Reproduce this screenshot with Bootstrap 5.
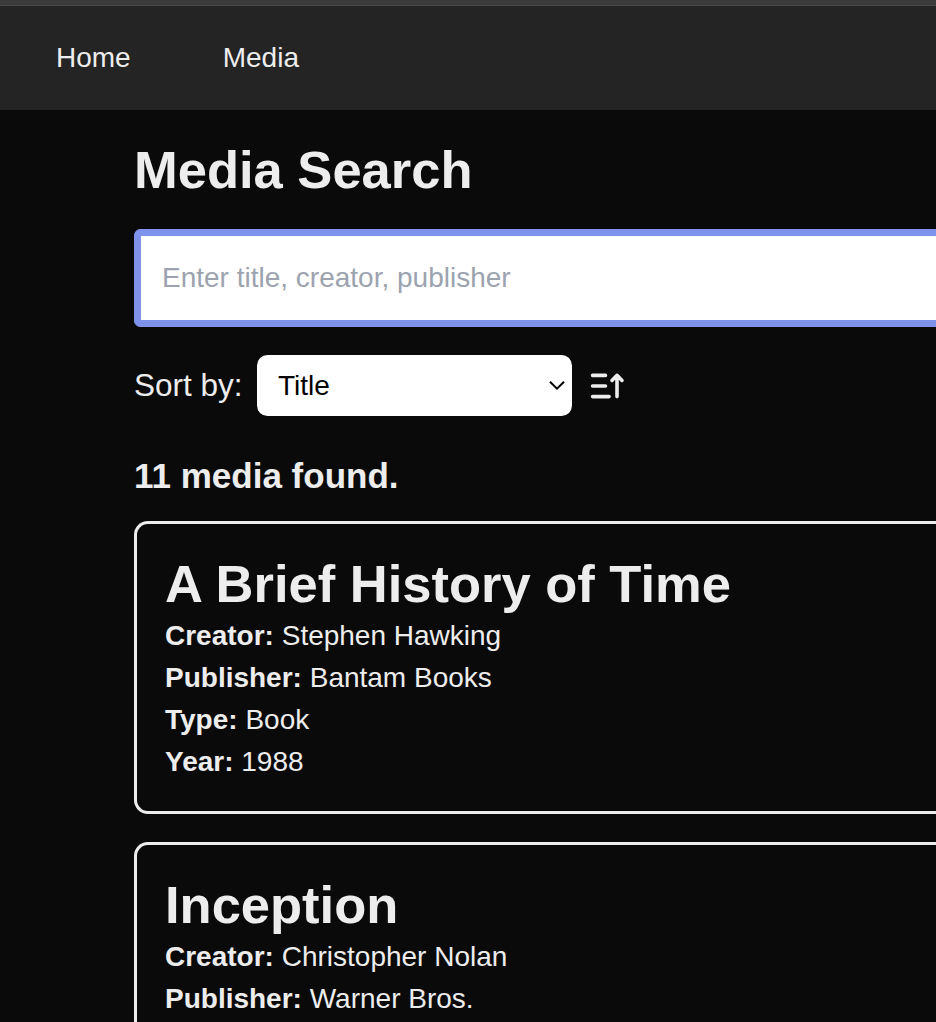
<!DOCTYPE html>
<html lang="en">
<head>
<meta charset="utf-8">
<meta name="viewport" content="width=device-width, initial-scale=1">
<title>Media Search</title>
<link href="https://cdn.jsdelivr.net/npm/bootstrap@5.3.0/dist/css/bootstrap.min.css" rel="stylesheet">
<style>
  body { background: #0a0a0a; color: #ededed; font: 28px/42px "Liberation Sans", Arial, sans-serif; height: 1022px; }
  .top-strip { height: 6px; background: #3c3c3c; border-bottom: 1px solid #484848; }
  .site-nav { height: 104px; background: #242424; padding-left: 56px; gap: 92px; }
  .site-nav .nav-link { color: #ededed; padding: 0; }
  .page-body { padding: 28px 0 0 134px; }
  h1, .media-card h2 { font-size: 52.5px; line-height: 63px; font-weight: 700; }
  h1 { margin-bottom: 28px; }
  .search-box.form-control { height: 98px; padding: 0 21px; border: 7px solid #7f93ec; border-right: 0; border-radius: 7px 0 0 7px; font-size: 28px; background: #fff; box-shadow: none; }
  .search-box.form-control::placeholder { color: #9ca3af; opacity: 1; }
  .sort-row { height: 61px; margin-top: 28px; gap: 14.5px; font-size: 31.5px; }
  .sort-row label { padding-bottom: 2px; }
  .sort-select { width: 315px; height: 61px; }
  .sort-select .form-select { width: 315px; height: 61px; padding: 0 21px; border: 0; border-radius: 10.5px; font-size: 28px; line-height: 42px; color: #000; background: #fff; }
  .select-arrow { right: 7px; top: 25px; pointer-events: none; }
  .found-count { font-size: 35px; line-height: 49px; margin: 35px 0 21px; font-weight: 700; }
  .media-card { background: transparent; color: inherit; border: 3px solid #ededed; border-right: 0; border-radius: 14px 0 0 14px; padding: 28px; margin-bottom: 28px; }
  .media-card:last-child { border-bottom: 0; border-bottom-left-radius: 0; padding-bottom: 2px; margin-bottom: 0; }
</style>
</head>
<body class="overflow-hidden">
<div class="top-strip"></div>
<nav class="site-nav d-flex align-items-center">
  <a class="nav-link" href="#">Home</a>
  <a class="nav-link" href="#">Media</a>
</nav>
<main class="page-body">
  <h1>Media Search</h1>
  <input class="form-control search-box" type="text" placeholder="Enter title, creator, publisher" aria-label="Search">
  <div class="sort-row d-flex align-items-center">
    <label for="sort">Sort by:</label>
    <div class="sort-select position-relative">
      <select id="sort" class="form-select"><option>Title</option></select>
      <svg class="select-arrow position-absolute" width="16" height="12" viewBox="0 0 16 12" fill="none" stroke="#000" stroke-width="2"><path d="M1 1.7 8 8.7 15 1.7"/></svg>
    </div>
    <svg class="sort-icon" width="42" height="42" viewBox="0 0 42 42" fill="none" stroke="#ededed" stroke-width="3.6" stroke-linecap="round" stroke-linejoin="round"><path d="M5.6 10.4H18.5M5.6 21H18.5M5.6 31.6H22.1M30 31.6V10.4M25 15.4 30 10.3 35 15.4"/></svg>
  </div>
  <p class="found-count">11 media found.</p>
  <article class="card media-card">
    <h2 class="m-0">A Brief History of Time</h2>
    <div><strong>Creator:</strong> Stephen Hawking</div>
    <div><strong>Publisher:</strong> Bantam Books</div>
    <div><strong>Type:</strong> Book</div>
    <div><strong>Year:</strong> 1988</div>
  </article>
  <article class="card media-card">
    <h2 class="m-0">Inception</h2>
    <div><strong>Creator:</strong> Christopher Nolan</div>
    <div><strong>Publisher:</strong> Warner Bros.</div>
  </article>
</main>
<script src="https://cdn.jsdelivr.net/npm/bootstrap@5.3.0/dist/js/bootstrap.bundle.min.js"></script>
</body>
</html>
